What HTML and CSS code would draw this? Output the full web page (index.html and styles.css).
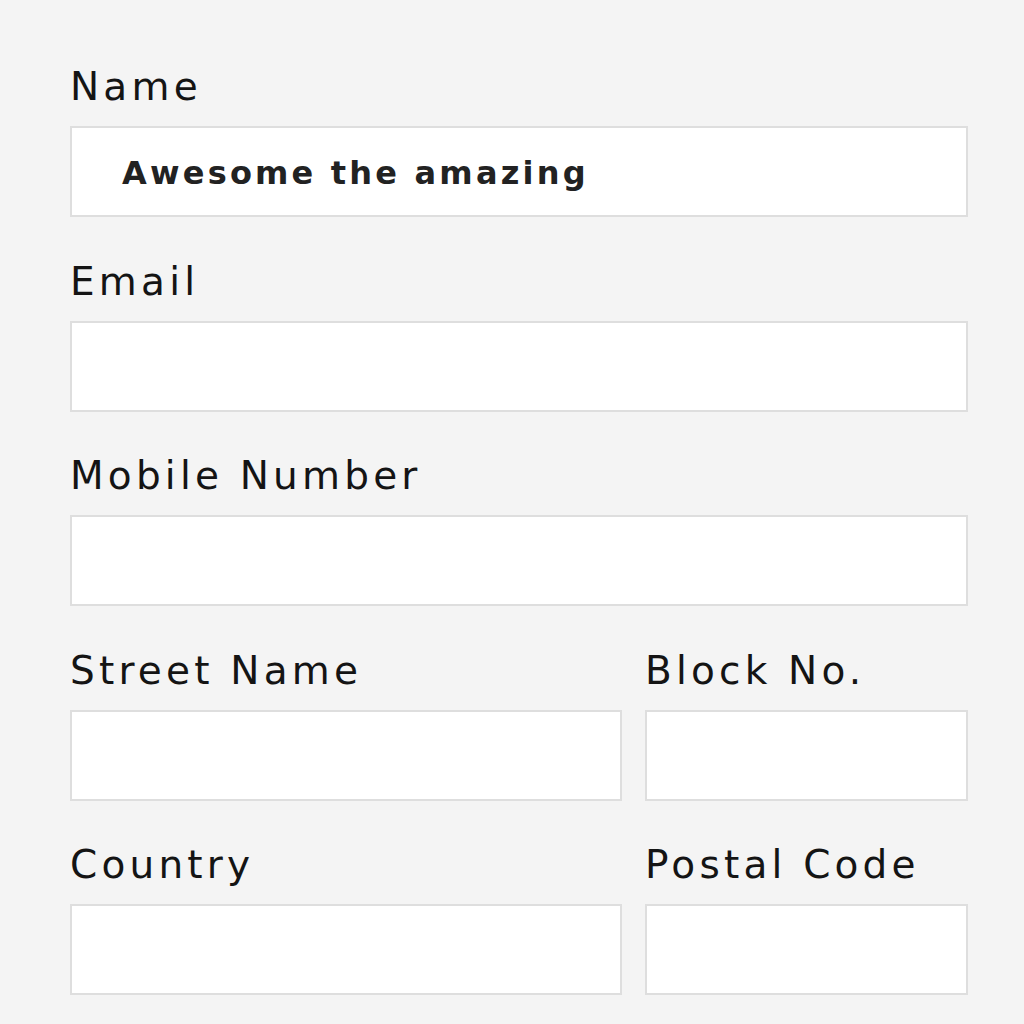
FILE: index.html
```html
<!DOCTYPE html>
<html>
<head>
<meta charset="utf-8">
<link rel="stylesheet" href="styles.css">
</head>
<body>
<form class="form">
  <div class="field">
    <label class="label">Name</label>
    <div class="input"><span class="value">Awesome the amazing</span></div>
  </div>
  <div class="field">
    <label class="label">Email</label>
    <div class="input"></div>
  </div>
  <div class="field">
    <label class="label">Mobile Number</label>
    <div class="input"></div>
  </div>
  <div class="row">
    <div class="field">
      <label class="label">Street Name</label>
      <div class="input"></div>
    </div>
    <div class="field">
      <label class="label">Block No.</label>
      <div class="input"></div>
    </div>
  </div>
  <div class="row">
    <div class="field">
      <label class="label">Country</label>
      <div class="input"></div>
    </div>
    <div class="field">
      <label class="label">Postal Code</label>
      <div class="input"></div>
    </div>
  </div>
</form>
</body>
</html>
```
FILE: styles.css
```css
html, body {
  margin: 0;
  padding: 0;
  background: #f4f4f4;
  height: 100%;
}
body {
  font-family: "DejaVu Sans", Lato, sans-serif;
  color: #111;
}
.form {
  display: flex;
  flex-direction: column;
  gap: 41.5px;
  padding: 64px 56px 0 70px;
  width: 898px;
}
.field {
  display: flex;
  flex-direction: column;
}
.label {
  font-size: 39px;
  line-height: 46px;
  height: 46px;
  margin-bottom: 16px;
  letter-spacing: 4.2px;
  color: #141414;
}
.input {
  box-sizing: border-box;
  height: 91px;
  background: #fff;
  border: 2px solid #dedede;
  display: flex;
  align-items: center;
  padding-left: 50px;
}
.value {
  font-size: 32px;
  font-weight: 700;
  letter-spacing: 3.2px;
  color: #222;
  margin-top: 2px;
}
.row {
  display: grid;
  grid-template-columns: 552px 323px;
  gap: 23px;
}
```
